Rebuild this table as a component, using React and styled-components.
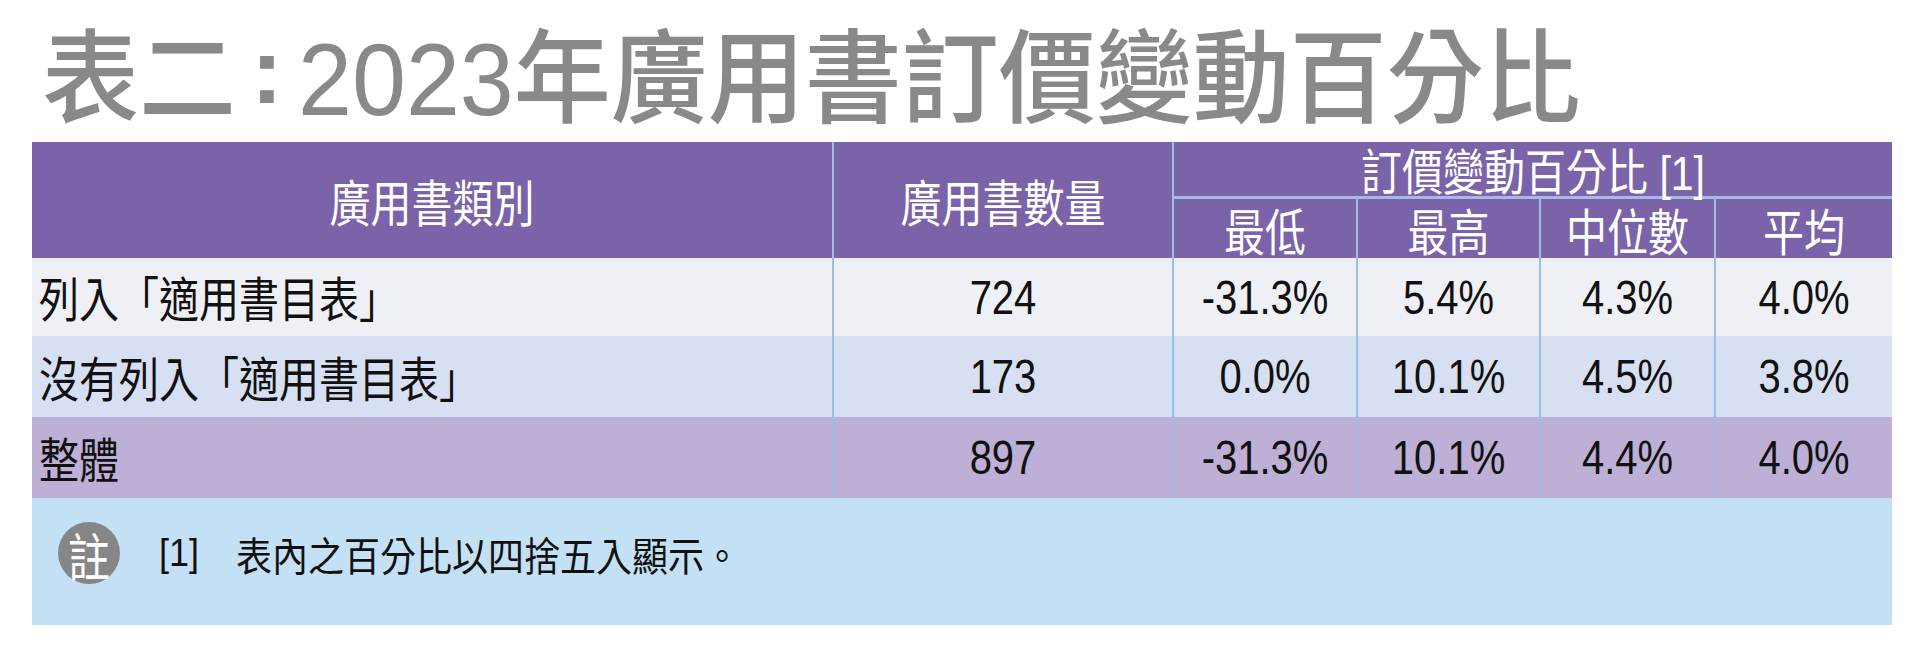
import React from "react";
import styled, { createGlobalStyle } from "styled-components";

const GlobalStyle = createGlobalStyle`
  html, body {
    margin: 0;
    padding: 0;
    background: #ffffff;
  }
  body {
    font-family: "Liberation Sans", "Noto Sans CJK TC", sans-serif;
  }
`;

const COLS = "800px 340px 184px 183px 175px 178px";
const LINE = "#9dbde6";

const Page = styled.div`
  width: 1932px;
  height: 650px;
  padding: 30px 40px 0 32px;
  box-sizing: border-box;
`;

const Title = styled.h1`
  margin: 0 0 12px 10px;
  height: 100px;
  font-size: 97px;
  line-height: 100px;
  font-weight: 500;
  color: #898989;
  white-space: nowrap;
`;

const Stretch = styled.span`
  display: inline-block;
  transform: scaleY(${(p) => p.$y || 1.2});
  transform-origin: center;
  white-space: nowrap;
`;

const Colon = styled.span`
  display: inline-block;
  width: 62px;
  text-align: center;
  font-weight: 700;
  transform: translateY(-8px) scaleY(0.9);
`;

const Table = styled.div`
  width: 1860px;
`;

const Head = styled.div`
  display: grid;
  grid-template-columns: ${COLS};
  grid-template-rows: 57px 59px;
  background: #7b63a9;
  color: #ffffff;
  font-size: 41px;
`;

const HeadCell = styled.div`
  grid-column: ${(p) => p.$col};
  grid-row: ${(p) => p.$row};
  display: flex;
  align-items: center;
  justify-content: center;
  box-sizing: border-box;
  border-left: ${(p) => (p.$first ? "none" : `2px solid ${LINE}`)};
  border-bottom: ${(p) => (p.$under ? `3px solid ${LINE}` : "none")};
`;

const Row = styled.div`
  display: grid;
  grid-template-columns: ${COLS};
  height: ${(p) => p.$h}px;
  background: ${(p) => p.$bg};
  font-size: 40px;
  color: #111111;
`;

const Cell = styled.div`
  display: flex;
  align-items: center;
  justify-content: ${(p) => (p.$label ? "flex-start" : "center")};
  padding-left: ${(p) => (p.$label ? "7px" : "0")};
  box-sizing: border-box;
  border-left: ${(p) => (p.$label ? "none" : `2px solid ${LINE}`)};
`;

const Note = styled.div`
  height: 127px;
  background: #c4e0f4;
  display: flex;
  align-items: flex-start;
  padding: 24px 0 0 26px;
  box-sizing: border-box;
  color: #111111;
`;

const Badge = styled.div`
  width: 62px;
  height: 62px;
  border-radius: 50%;
  background: #868686;
  color: #ffffff;
  font-size: 42px;
  display: flex;
  align-items: center;
  justify-content: center;
  flex-shrink: 0;
`;

const NoteRef = styled.span`
  height: 62px;
  display: flex;
  align-items: center;
  margin-left: 39px;
  font-size: 36px;
`;

const NoteText = styled.span`
  height: 62px;
  display: flex;
  align-items: center;
  margin-left: 37px;
  font-size: 36px;
`;

const subHeads = ["最低", "最高", "中位數", "平均"];

const rows = [
  { label: "列入「適用書目表」", count: "724", vals: ["-31.3%", "5.4%", "4.3%", "4.0%"], bg: "#efeff6", h: 78 },
  { label: "沒有列入「適用書目表」", count: "173", vals: ["0.0%", "10.1%", "4.5%", "3.8%"], bg: "#d7e0f2", h: 81 },
  { label: "整體", count: "897", vals: ["-31.3%", "10.1%", "4.4%", "4.0%"], bg: "#bdafd6", h: 81 },
];

export default function App() {
  return (
    <>
      <GlobalStyle />
      <Page>
        <Title>
          <Stretch $y={1.06}>
            表二<Colon>:</Colon>2023年廣用書訂價變動百分比
          </Stretch>
        </Title>
        <Table>
          <Head>
            <HeadCell $col="1" $row="1 / 3" $first>
              <Stretch $y={1.22}>廣用書類別</Stretch>
            </HeadCell>
            <HeadCell $col="2" $row="1 / 3">
              <Stretch $y={1.22}>廣用書數量</Stretch>
            </HeadCell>
            <HeadCell $col="3 / 7" $row="1" $under>
              <Stretch $y={1.18}>訂價變動百分比 [1]</Stretch>
            </HeadCell>
            {subHeads.map((s, i) => (
              <HeadCell key={s} $col={String(i + 3)} $row="2">
                <Stretch $y={1.22}>{s}</Stretch>
              </HeadCell>
            ))}
          </Head>
          {rows.map((r) => (
            <Row key={r.label} $bg={r.bg} $h={r.h}>
              <Cell $label>
                <Stretch $y={1.2}>{r.label}</Stretch>
              </Cell>
              <Cell>
                <Stretch $y={1.2}>{r.count}</Stretch>
              </Cell>
              {r.vals.map((v, i) => (
                <Cell key={i}>
                  <Stretch $y={1.2}>{v}</Stretch>
                </Cell>
              ))}
            </Row>
          ))}
          <Note>
            <Badge>
              <Stretch $y={1.25}>註</Stretch>
            </Badge>
            <NoteRef>
              <Stretch $y={1.1}>[1]</Stretch>
            </NoteRef>
            <NoteText>
              <Stretch $y={1.1}>表內之百分比以四捨五入顯示。</Stretch>
            </NoteText>
          </Note>
        </Table>
      </Page>
    </>
  );
}
